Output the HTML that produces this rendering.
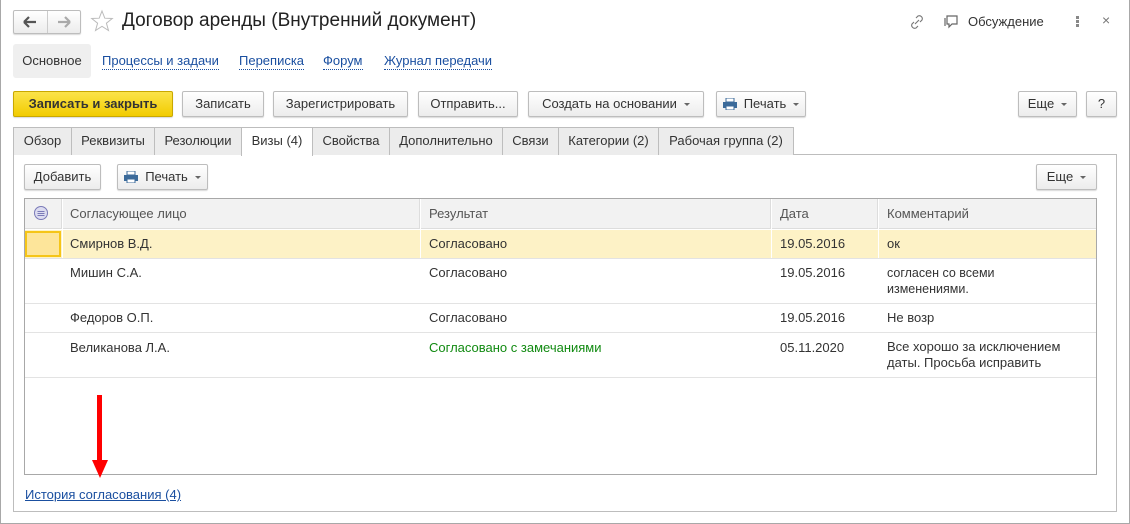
<!DOCTYPE html>
<html><head><meta charset="utf-8"><style>
*{box-sizing:border-box;margin:0;padding:0}
body{width:1130px;height:524px;background:#fff;font-family:"Liberation Sans",Arial,sans-serif;font-size:13px;color:#333;position:relative;overflow:hidden}
.a{position:absolute}
.win{left:0;top:0;width:1130px;height:524px;border:1px solid #a8a8a8;border-top:none}
.btn{position:absolute;height:26px;border:1px solid #bdbdbd;border-radius:2px;background:linear-gradient(#fff,#ececec);box-shadow:0 1px 1px rgba(0,0,0,.15);text-align:center;line-height:24px;color:#333;font-size:13px;white-space:nowrap}
.dd::after{content:"";display:inline-block;margin-left:7px;vertical-align:middle;border-left:3px solid transparent;border-right:3px solid transparent;border-top:3px solid #666}
.tab{position:absolute;top:127px;height:28px;border:1px solid #bdbdbd;border-bottom:none;background:#ececec;line-height:26px;text-align:center;color:#333}
.lnk{color:#1a4fa0;border-bottom:1px dotted #1a4fa0;position:absolute;top:53px;line-height:16px}
.cell{position:absolute;line-height:14px}
.hl{position:absolute;height:1px;background:#e3e3e3;left:25px;width:1071px}
.pr{display:inline-block;width:14px;height:12px;vertical-align:-2px;margin-right:7px;position:relative}
</style></head><body>
<div class="a win"></div>
<div class="btn" style="left:13px;top:10px;width:68px;height:24px;padding:0"></div>
<div class="a" style="left:47px;top:11px;width:1px;height:22px;background:#ccc"></div>
<svg class="a" style="left:22px;top:15px" width="16" height="14"><path d="M2 7H14M2 7L7 2M2 7L7 12" stroke="#555" stroke-width="2.2" fill="none"/></svg>
<svg class="a" style="left:56px;top:15px" width="16" height="14"><path d="M14 7H2M14 7L9 2M14 7L9 12" stroke="#aaa" stroke-width="2.2" fill="none"/></svg>
<svg class="a" style="left:90px;top:9px" width="24" height="24"><path d="M12 2L14.8 9.2 22.3 9.5 16.4 14.2 18.5 21.5 12 17.3 5.5 21.5 7.6 14.2 1.7 9.5 9.2 9.2Z" fill="none" stroke="#bbb" stroke-width="1"/></svg>
<div class="a" style="left:122px;top:9px;font-size:19px;color:#222;line-height:24px">Договор аренды (Внутренний документ)</div>
<svg class="a" style="left:908px;top:13px" width="18" height="18"><path d="M7 11l4-4M8 5l2-2a3 3 0 014 4l-2 2M10 13l-2 2a3 3 0 01-4-4l2-2" stroke="#777" fill="none" stroke-width="1.1"/></svg>
<svg class="a" style="left:943px;top:13px" width="18" height="17"><path d="M4 3h10v8H9l-3 3v-3H4z M2 5v8" stroke="#666" fill="none" stroke-width="1.2"/></svg>
<div class="a" style="left:968px;top:14px;line-height:16px">Обсуждение</div>
<div class="a" style="left:1076px;top:16px;width:3px;height:3px;background:#888;box-shadow:0 4px #888,0 8px #888"></div>
<div class="a" style="left:1102px;top:12px;font-size:14px;color:#777">×</div>
<div class="a" style="left:13px;top:44px;width:78px;height:34px;background:#efefef;border-radius:3px;line-height:34px;text-align:center">Основное</div>
<span class="lnk" style="left:102px">Процессы и задачи</span>
<span class="lnk" style="left:239px">Переписка</span>
<span class="lnk" style="left:323px">Форум</span>
<span class="lnk" style="left:384px">Журнал передачи</span>
<div class="btn" style="left:13px;top:91px;width:160px;background:linear-gradient(#fbe34a,#f2cc00);border-color:#c9a800;font-weight:bold;color:#333">Записать и закрыть</div>
<div class="btn" style="left:182px;top:91px;width:82px">Записать</div>
<div class="btn" style="left:273px;top:91px;width:135px">Зарегистрировать</div>
<div class="btn" style="left:418px;top:91px;width:100px">Отправить...</div>
<div class="btn dd" style="left:528px;top:91px;width:176px">Создать на основании</div>
<div class="btn dd" style="left:716px;top:91px;width:90px"><span class="pr"><svg width="14" height="12"><rect x="3" y="0" width="8" height="4" fill="#fff" stroke="#3b6a9a"/><rect x="0" y="4" width="14" height="6" fill="#3b6a9a"/><rect x="3" y="8" width="8" height="4" fill="#fff" stroke="#3b6a9a"/></svg></span>Печать</div>
<div class="btn dd" style="left:1018px;top:91px;width:59px">Еще</div>
<div class="btn" style="left:1086px;top:91px;width:31px">?</div>
<div class="a" style="left:13px;top:154px;width:1104px;height:358px;border:1px solid #bdbdbd"></div>
<div class="tab" style="left:13px;width:59px">Обзор</div>
<div class="tab" style="left:71px;width:84px">Реквизиты</div>
<div class="tab" style="left:154px;width:88px">Резолюции</div>
<div class="tab" style="left:241px;width:72px;background:#fff;height:29px">Визы (4)</div>
<div class="tab" style="left:312px;width:78px">Свойства</div>
<div class="tab" style="left:389px;width:114px">Дополнительно</div>
<div class="tab" style="left:502px;width:57px">Связи</div>
<div class="tab" style="left:558px;width:101px">Категории (2)</div>
<div class="tab" style="left:658px;width:136px">Рабочая группа (2)</div>
<div class="btn" style="left:24px;top:164px;width:77px">Добавить</div>
<div class="btn dd" style="left:117px;top:164px;width:91px"><span class="pr"><svg width="14" height="12"><rect x="3" y="0" width="8" height="4" fill="#fff" stroke="#3b6a9a"/><rect x="0" y="4" width="14" height="6" fill="#3b6a9a"/><rect x="3" y="8" width="8" height="4" fill="#fff" stroke="#3b6a9a"/></svg></span>Печать</div>
<div class="btn dd" style="left:1036px;top:164px;width:61px">Еще</div>
<div class="a" style="left:24px;top:198px;width:1073px;height:277px;border:1px solid #a8a8a8"></div>
<div class="a" style="left:25px;top:199px;width:1071px;height:30px;background:#f2f2f2;border-bottom:1px solid #ddd"></div>
<div class="a" style="left:61px;top:199px;width:2px;height:30px;background:#fff;border-left:1px solid #ddd"></div>
<div class="a" style="left:419px;top:199px;width:2px;height:30px;background:#fff;border-left:1px solid #ddd"></div>
<div class="a" style="left:770px;top:199px;width:2px;height:30px;background:#fff;border-left:1px solid #ddd"></div>
<div class="a" style="left:877px;top:199px;width:2px;height:30px;background:#fff;border-left:1px solid #ddd"></div>
<svg class="a" style="left:33px;top:205px" width="16" height="16"><circle cx="8" cy="8" r="6.5" fill="#dcdcf0" stroke="#7a7ab8"/><path d="M4.5 6.5h7M4.5 8.5h7M4.5 10.5h7" stroke="#7a7ab8"/></svg>
<div class="cell" style="left:70px;top:207px;color:#555">Согласующее лицо</div>
<div class="cell" style="left:429px;top:207px;color:#555">Результат</div>
<div class="cell" style="left:780px;top:207px;color:#555">Дата</div>
<div class="cell" style="left:887px;top:207px;color:#555">Комментарий</div>
<div class="a" style="left:25px;top:230px;width:1071px;height:28px;background:#fdf2c6"></div>
<div class="a" style="left:25px;top:231px;width:36px;height:26px;background:#fde59a;border:2px solid #f5c518"></div>
<div class="a" style="left:62px;top:230px;width:1px;height:28px;background:#fff"></div>
<div class="a" style="left:420px;top:230px;width:1px;height:28px;background:#fff"></div>
<div class="a" style="left:771px;top:230px;width:1px;height:28px;background:#fff"></div>
<div class="a" style="left:878px;top:230px;width:1px;height:28px;background:#fff"></div>
<div class="hl" style="top:258px"></div>
<div class="hl" style="top:303px"></div>
<div class="hl" style="top:332px"></div>
<div class="hl" style="top:377px"></div>
<div class="cell" style="left:70px;top:237px">Смирнов В.Д.</div>
<div class="cell" style="left:429px;top:237px">Согласовано</div>
<div class="cell" style="left:780px;top:237px">19.05.2016</div>
<div class="cell" style="left:887px;top:237px">ок</div>
<div class="cell" style="left:70px;top:266px">Мишин С.А.</div>
<div class="cell" style="left:429px;top:266px">Согласовано</div>
<div class="cell" style="left:780px;top:266px">19.05.2016</div>
<div class="cell" style="left:887px;top:265px;line-height:16px;font-size:12.5px">согласен со всеми<br>изменениями.</div>
<div class="cell" style="left:70px;top:311px">Федоров О.П.</div>
<div class="cell" style="left:429px;top:311px">Согласовано</div>
<div class="cell" style="left:780px;top:311px">19.05.2016</div>
<div class="cell" style="left:887px;top:311px">Не возр</div>
<div class="cell" style="left:70px;top:341px">Великанова Л.А.</div>
<div class="cell" style="left:429px;top:341px;color:#118a11">Согласовано с замечаниями</div>
<div class="cell" style="left:780px;top:341px">05.11.2020</div>
<div class="cell" style="left:887px;top:339px;line-height:16px">Все хорошо за исключением<br>даты. Просьба исправить</div>
<div class="a" style="left:97px;top:395px;width:5px;height:68px;background:#f00"></div>
<div class="a" style="left:92px;top:460px;width:0;height:0;border-left:8px solid transparent;border-right:8px solid transparent;border-top:18px solid #f00"></div>
<div class="a" style="left:25px;top:487px;color:#1a4fa0;text-decoration:underline;line-height:16px">История согласования (4)</div>
</body></html>
